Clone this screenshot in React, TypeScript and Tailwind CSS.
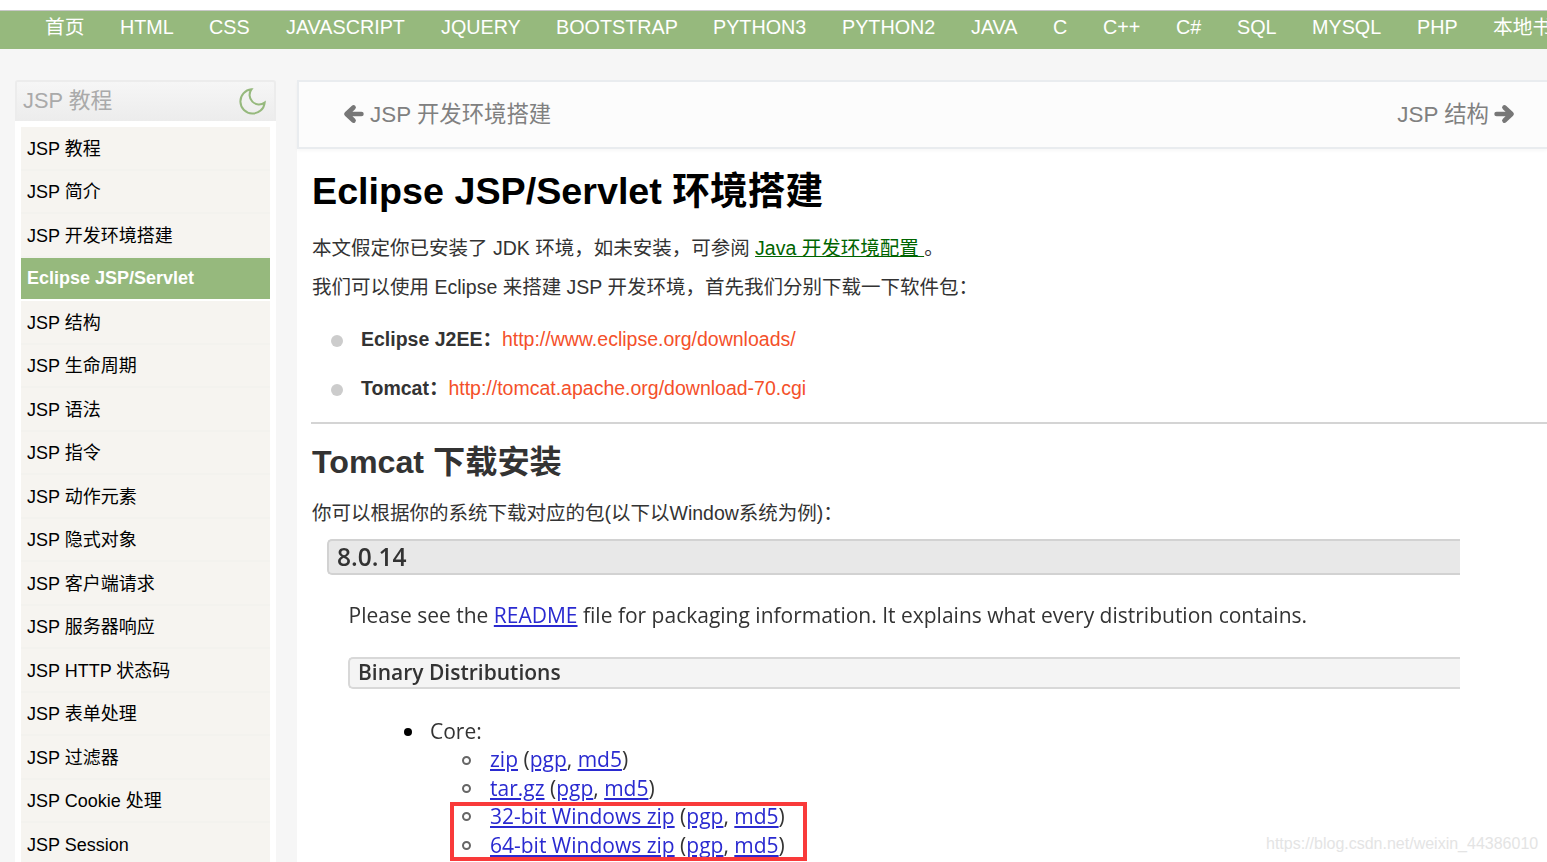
const font = { fontFamily: '"Liberation Sans", "Noto Sans CJK SC", sans-serif' };
const navItems = [
  ["首页", "w-[75px]"], ["HTML", "w-[89px]"], ["CSS", "w-[77px]"], ["JAVASCRIPT", "w-[155px]"], ["JQUERY", "w-[115px]"],
  ["BOOTSTRAP", "w-[157px]"], ["PYTHON3", "w-[129px]"], ["PYTHON2", "w-[129px]"], ["JAVA", "w-[82px]"], ["C", "w-[50px]"],
  ["C++", "w-[73px]"], ["C#", "w-[61px]"], ["SQL", "w-[75px]"], ["MYSQL", "w-[105px]"], ["PHP", "w-[76px]"], ["本地书架", "w-[90px]"],
];
const sideItems = [
  "JSP 教程", "JSP 简介", "JSP 开发环境搭建", "Eclipse JSP/Servlet", "JSP 结构", "JSP 生命周期", "JSP 语法", "JSP 指令", "JSP 动作元素",
  "JSP 隐式对象", "JSP 客户端请求", "JSP 服务器响应", "JSP HTTP 状态码", "JSP 表单处理", "JSP 过滤器", "JSP Cookie 处理", "JSP Session",
];

function Arrow({ flip }: { flip?: boolean }) {
  return (
    <svg width="21" height="22" viewBox="0 0 24 24" fill="none" stroke="#777" strokeWidth="5.4" strokeLinejoin="round" strokeLinecap="round" className={flip ? "scale-x-[-1]" : ""}>
      <path d="M21 12H5M12 4.5L4 12l8 7.5" />
    </svg>
  );
}

function Row({ name }: { name: string }) {
  return (
    <div className="flex h-[28.4px] items-center">
      <span className="mr-[19px] h-[9px] w-[9px] shrink-0 rounded-full border-2 border-[#666]" />
      <span className="whitespace-nowrap">
        <a className="text-[#2a2ad0] underline">{name}</a> (<a className="text-[#2a2ad0] underline">pgp</a>, <a className="text-[#2a2ad0] underline">md5</a>)
      </span>
    </div>
  );
}

export default function App() {
  return (
    <div className="relative h-[862px] w-[1547px] overflow-hidden bg-[#f6f6f6]" style={font}>
      <div className="h-[11px] border-b border-[#c8c8c8] bg-white" />
      <nav className="flex h-[38px] items-center overflow-hidden bg-[#96b97d] pb-[5px] pl-[45px] text-[19.75px] text-white">
        {navItems.map(([n, w]) => (
          <span key={n} className={`${w} shrink-0 whitespace-nowrap`}>{n}</span>
        ))}
      </nav>
      <div className="flex gap-[21px] pl-[15px] pt-[31px]">
        <aside className="w-[261px] shrink-0">
          <div className="flex h-[41px] items-center justify-between rounded-t-[3px] border-2 border-b-0 border-[#ececec] bg-gradient-to-b from-[#f6f6f6] to-[#ececec] pl-[6px] pr-[8px] text-[21.8px] text-[#aaa]">
            <span>JSP 教程</span>
            <svg width="27" height="27" viewBox="2 2 20 20" fill="none" stroke="#96b97d" strokeWidth="1.5">
              <path d="M21 12.79A9 9 0 1 1 11.21 3 7 7 0 0 0 21 12.79z" />
            </svg>
          </div>
          <ul className="bg-white px-[6px] pt-[6px]">
            {sideItems.map((s) => {
              const active = s.startsWith("Eclipse");
              return (
                <li key={s} className={`flex items-center pl-[6px] text-[18px] ${active ? "mb-[2.5px] h-[41px] bg-[#96b97d] pt-[1px] font-bold text-white" : "h-[43.5px] border-b-2 border-[#f3f2ee] bg-[#f6f4f0] pt-[3px] text-black"}`}>
                  {s}
                </li>
              );
            })}
          </ul>
        </aside>
        <main className="min-w-0 flex-1 bg-white">
          <div className="flex h-[69px] items-center justify-between border-y-2 border-l-2 border-[#e9ecef] bg-[#fcfcfc] pl-[44px] pr-[32px] text-[22.4px] text-[#808080] shadow-[0_2px_3px_rgba(0,0,0,0.03)]">
            <span className="flex items-center gap-[6px]"><Arrow />JSP 开发环境搭建</span>
            <span className="flex items-center gap-[5px]">JSP 结构<Arrow flip /></span>
          </div>
          <div className="pl-[15px]">
            <h1 className="mt-[18px] h-[48px] text-[37.7px] font-bold leading-[48px] text-black">Eclipse JSP/Servlet 环境搭建</h1>
            <p className="mt-[20px] h-[26px] text-[19.5px] leading-[26px] text-[#333]">
              本文假定你已安装了 JDK 环境，如未安装，可参阅 <a className="text-[#006400] underline">Java 开发环境配置 </a>。
            </p>
            <p className="mt-[13px] h-[26px] text-[19.5px] leading-[26px] text-[#333]">我们可以使用 Eclipse 来搭建 JSP 开发环境，首先我们分别下载一下软件包：</p>
            <ul className="mt-[15px] pl-[19px] text-[19.5px] text-[#333]">
              <li className="flex h-[49px] items-center">
                <span className="mr-[18px] mt-[3px] h-[12px] w-[12px] rounded-full bg-[#ccc]" />
                <b>Eclipse J2EE：</b><a className="text-[#f4502a]">http://www.eclipse.org/downloads/</a>
              </li>
              <li className="flex h-[49px] items-center">
                <span className="mr-[18px] mt-[3px] h-[12px] w-[12px] rounded-full bg-[#ccc]" />
                <b>Tomcat：</b><a className="text-[#f4502a]">http://tomcat.apache.org/download-70.cgi</a>
              </li>
            </ul>
            <hr className="-ml-px mt-[9px] border-t-2 border-[#d4d4d4]" />
            <h2 className="mt-[16px] h-[44px] text-[32.2px] font-bold leading-[44px] text-[#333]">Tomcat 下载安装</h2>
            <p className="mt-[16px] h-[26px] text-[19.5px] leading-[26px] text-[#333]">你可以根据你的系统下载对应的包(以下以Window系统为例)：</p>
            <div className="ml-[15px] mt-[13px] w-[1133px] text-[#333] blur-[0.5px]" style={{ fontFamily: '"Open Sans", sans-serif' }}>
              <div className="flex h-[36px] items-center rounded-l-[5px] border-2 border-r-0 border-[#d2d2d2] bg-[#e8e8e8] pl-[8px] text-[24.5px] font-semibold">8.0.14</div>
              <p className="ml-[21.5px] mt-[25px] h-[30px] text-[21px] leading-[30px]">
                Please see the <a className="text-[#2a2ad0] underline">README</a> file for packaging information. It explains what every distribution contains.
              </p>
              <div className="ml-[21px] mt-[27px] flex h-[32px] items-center rounded-l-[5px] border-2 border-r-0 border-[#d8d8d8] bg-[#f4f4f4] pl-[8px] text-[21px] font-semibold">Binary Distributions</div>
              <div className="ml-[77px] mt-[29px] flex h-[28px] items-center text-[21px]">
                <span className="mr-[18px] h-[8px] w-[8px] rounded-full bg-black" />Core:
              </div>
              <div className="ml-[135px] text-[21px]">
                <Row name="zip" />
                <Row name="tar.gz" />
                <div className="relative">
                  <Row name="32-bit Windows zip" />
                  <Row name="64-bit Windows zip" />
                  <div className="absolute left-[-12px] top-[-1px] h-[59px] w-[357px] border-4 border-[#f93a3a]" />
                </div>
              </div>
            </div>
          </div>
        </main>
      </div>
      <div className="absolute left-[1266px] top-[832px] whitespace-nowrap text-[16px] text-[#e4e4e4]">https://blog.csdn.net/weixin_44386010</div>
    </div>
  );
}
